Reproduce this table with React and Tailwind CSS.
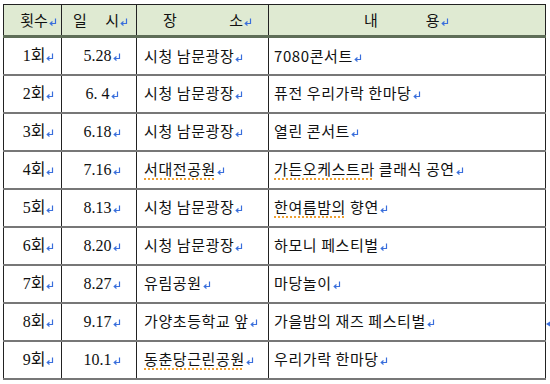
const rows = [
  { no: "1회", date: "5.28", place: "시청 남문광장", desc: "7080콘서트" },
  { no: "2회", date: "6. 4", place: "시청 남문광장", desc: "퓨전 우리가락 한마당" },
  { no: "3회", date: "6.18", place: "시청 남문광장", desc: "열린 콘서트" },
  { no: "4회", date: "7.16", place: "서대전공원", placeMark: true, desc: "가든오케스트라 클래식 공연", descMark: "가든오케스트라" },
  { no: "5회", date: "8.13", place: "시청 남문광장", desc: "한여름밤의 향연", descMark: "한여름밤의" },
  { no: "6회", date: "8.20", place: "시청 남문광장", desc: "하모니 페스티벌" },
  { no: "7회", date: "8.27", place: "유림공원", desc: "마당놀이" },
  { no: "8회", date: "9.17", place: "가양초등학교 앞", desc: "가을밤의 재즈 페스티벌" },
  { no: "9회", date: "10.1", place: "동춘당근린공원", placeMark: true, desc: "우리가락 한마당" },
];

function Ret() {
  return (
    <svg width="8" height="8" viewBox="0 0 8 8" className="inline-block ml-[1px] align-baseline">
      <path d="M6.5 0.5 V5.5 H1.5" fill="none" stroke="#3a6fdc" strokeWidth="1.2" />
      <path d="M3.5 3.5 L1.2 5.5 L3.5 7.5" fill="none" stroke="#3a6fdc" strokeWidth="1.2" />
    </svg>
  );
}

function Squiggle({ children }) {
  return (
    <span className="underline decoration-dotted decoration-[#f0a030] decoration-2 underline-offset-[3px]">
      {children}
    </span>
  );
}

function Desc({ text, mark }) {
  if (!mark) return <>{text}</>;
  return (
    <>
      <Squiggle>{mark}</Squiggle>
      {text.slice(mark.length)}
    </>
  );
}

export default function App() {
  const serif = { fontFamily: '"Liberation Serif", "Noto Sans CJK KR", serif' };
  const sans = { fontFamily: '"Noto Sans CJK KR", "Noto Sans", sans-serif' };
  const th = "h-[32px] bg-[#dfead2] border-x border-[#222] border-b-[3px] border-b-[#5f6e58] font-normal p-0";
  const td = "h-[38px] border-x border-[#222] border-b-2 border-b-[#777] p-0";

  return (
    <div className="w-[550px] h-[384px] bg-white pl-[3px] pt-[4px] text-[15px] text-[#111]" style={sans}>
      <div className="relative w-[542px]">
        <table className="table-fixed border-collapse w-[542px] border-t border-t-[#222]">
          <colgroup>
            <col className="w-[58px]" />
            <col className="w-[75px]" />
            <col className="w-[132px]" />
            <col className="w-[277px]" />
          </colgroup>
          <thead>
            <tr>
              <th className={th}>
                <span className="pl-[12px]">횟수</span>
                <Ret />
              </th>
              <th className={th}>
                <div className="flex items-center justify-between pl-[11px] pr-[8px]">
                  <span>일</span>
                  <span>
                    시<Ret />
                  </span>
                </div>
              </th>
              <th className={th}>
                <div className="flex items-center justify-between pl-[26px] pr-[16px]">
                  <span>장</span>
                  <span>
                    소<Ret />
                  </span>
                </div>
              </th>
              <th className={th}>
                <div className="flex items-center pl-[95px]">
                  <span>내</span>
                  <span className="ml-[48px]">
                    용<Ret />
                  </span>
                </div>
              </th>
            </tr>
          </thead>
          <tbody>
            {rows.map((r, i) => (
              <tr key={i}>
                <td className={td + " text-center text-[16px]"} style={serif}>
                  <span className="pl-[12px]">{r.no}</span>
                  <Ret />
                </td>
                <td className={td + " text-center text-[16px]"} style={serif}>
                  <span className="pl-[6px] whitespace-pre">{r.date}</span>
                  <Ret />
                </td>
                <td className={td + " pl-[7px] tracking-[0.6px]"}>
                  {r.placeMark ? <Squiggle>{r.place}</Squiggle> : r.place}
                  <Ret />
                </td>
                <td className={td + " pl-[5px] tracking-[0.6px]"}>
                  <Desc text={r.desc} mark={r.descMark} />
                  <Ret />
                </td>
              </tr>
            ))}
          </tbody>
        </table>
        <svg width="5" height="6" viewBox="0 0 5 6" className="absolute left-[543px] top-[317px]">
          <path d="M0 3 L4 0.5 V5.5 Z" fill="#3a6fdc" />
        </svg>
      </div>
    </div>
  );
}
